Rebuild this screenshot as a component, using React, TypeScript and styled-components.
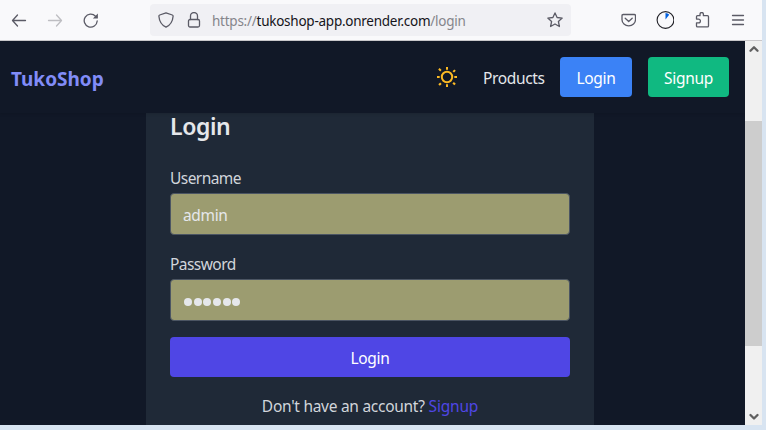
import React from "react";
import styled, { createGlobalStyle } from "styled-components";

const GlobalStyle = createGlobalStyle`
  * { box-sizing: border-box; }
  body { margin: 0; overflow: hidden; font-family: "Noto Sans", "Open Sans", sans-serif; }
  button, input { font: inherit; }
`;

const Desktop = styled.div`
  width: 766px;
  height: 430px;
  padding: 0 4px 5px 0;
  background: #d8e4f1;
`;

const BrowserWindow = styled.div`
  display: flex;
  flex-direction: column;
  height: 100%;
`;

const Toolbar = styled.header`
  display: flex;
  align-items: center;
  height: 41px;
  padding: 0 16px 0 11px;
  background: #f9f9fb;
  border-bottom: 1px solid #c8c7ca;
`;

const Icon = styled.svg<{ $size?: number; $color?: string; $stroke?: number }>`
  display: block;
  flex: none;
  width: ${(p) => p.$size ?? 16}px;
  height: ${(p) => p.$size ?? 16}px;
  color: ${(p) => p.$color ?? "#5b5b66"};
  fill: none;
  stroke: currentColor;
  stroke-width: ${(p) => p.$stroke ?? 1.3};
  stroke-linecap: round;
  stroke-linejoin: round;
`;

const NavigationIcons = styled.div`
  display: flex;
  gap: 20px;
  width: 139px;
`;

const AddressBar = styled.div`
  display: flex;
  align-items: center;
  width: 421px;
  height: 32px;
  padding: 0 8px;
  background: #f0f0f4;
  border-radius: 4px;
`;

const SecurityIcons = styled.div`
  display: flex;
  gap: 12px;
  width: 54px;
`;

const Url = styled.div`
  flex: 1;
  padding-top: 2px;
  color: #85858b;
  font-size: 13.5px;
  line-height: 20px;
  letter-spacing: -0.25px;
  white-space: nowrap;
`;

const Host = styled.span`
  color: #15141a;
`;

const ExtensionIcons = styled.div`
  display: flex;
  align-items: center;
  gap: 20px;
  margin-left: auto;
`;

const Viewport = styled.div`
  display: flex;
  flex: 1;
  min-height: 0;
`;

const Page = styled.div`
  flex: 1;
  overflow: hidden;
  background: #111827;
  color: #e5e7eb;
`;

const Navbar = styled.nav`
  display: flex;
  align-items: center;
  height: 72px;
  padding: 0 16px 0 11px;
  background: #111827;
  box-shadow: 0 1px 3px rgba(0, 0, 0, 0.12);
  position: relative;
`;

const Label = styled.span<{ $size?: number; $spacing?: number }>`
  font-size: ${(p) => p.$size ?? 15.5}px;
  letter-spacing: ${(p) => p.$spacing ?? -0.35}px;
  line-height: 24px;
  white-space: nowrap;
`;

const Brand = styled(Label)`
  margin-right: auto;
  padding-top: 3px;
  color: #818cf8;
  font-weight: 700;
`;

const ProductsLink = styled(Label)`
  width: 77px;
  margin-left: 25px;
  padding-top: 2px;
`;

const NavButton = styled.button<{ $color: string; $width: number }>`
  width: ${(p) => p.$width}px;
  height: 40px;
  margin-right: 16px;
  padding: 2px 0 0;
  border: 0;
  border-radius: 4px;
  background: ${(p) => p.$color};
  color: #fff;
  &:last-child { margin-right: 0; }
`;

const Card = styled.form`
  display: flex;
  flex-direction: column;
  width: 448px;
  height: 312px;
  margin-left: 146px;
  padding: 0 24px;
  background: #1f2937;
`;

const Title = styled.h1`
  height: 32px;
  margin: -3px 0 24px;
  font-size: 23px;
  font-weight: 600;
  line-height: 32px;
  letter-spacing: -0.4px;
`;

const Field = styled.label`
  display: flex;
  flex-direction: column;
  gap: 3px;
  height: 86px;
  color: #d1d5db;
`;

const Input = styled.input`
  width: 400px;
  height: 42px;
  padding: 2px 12px 0;
  border: 1px solid #4b5563;
  border-radius: 4px;
  outline: none;
  background: #9c9c70;
  color: #e5e7eb;
  font-size: 15.5px;
  letter-spacing: -0.35px;
`;

const PasswordInput = styled.div`
  display: flex;
  align-items: center;
  gap: 1.7px;
  width: 400px;
  height: 42px;
  padding: 4px 13px 0;
  border: 1px solid #4b5563;
  border-radius: 4px;
  background: #9c9c70;
`;

const Dot = styled.span`
  width: 8px;
  height: 8px;
  border-radius: 50%;
  background: #e5e7eb;
`;

const SubmitButton = styled.button`
  height: 40px;
  margin-top: -1px;
  padding: 2px 0 0;
  border: 0;
  border-radius: 4px;
  background: #4f46e5;
  color: #fff;
`;

const Prompt = styled.div`
  display: flex;
  justify-content: center;
  gap: 4px;
  margin-top: 17px;
  color: #d1d5db;
`;

const SignupLink = styled(Label)`
  color: #4f46e5;
`;

const Scrollbar = styled.div`
  display: flex;
  flex-direction: column;
  justify-content: space-between;
  align-items: center;
  width: 17px;
  padding: 3px 0;
  background: #f0f0f0;
`;

const Thumb = styled.div`
  width: 17px;
  height: 225px;
  margin: 67px 0 auto;
  background: #cdcdcd;
`;

const BackIcon = () => (
  <Icon><path d="M14.5 8.500H1.800M6.500 3 1.500 8.500 6.500 14" /></Icon>
);

const ForwardIcon = () => (
  <Icon $color="#bebec2"><path d="M1.500 8.500h12.700M9.500 3 14.500 8.500 9.500 14" /></Icon>
);

const ReloadIcon = () => (
  <Icon>
    <path d="M14.2 9A6.500 6.500 0 1 1 12.500 4.200" />
    <path d="M14.900 1.500v5H9.900z" fill="currentColor" stroke="none" />
  </Icon>
);

const ShieldIcon = () => (
  <Icon><path d="M8 .8 14.3 3c.7.3.9.6.8 1.2-.4 5.2-2.3 8.6-7.1 11C3.200 12.800 1.300 9.400.9 4.200.8 3.600 1 3.300 1.700 3z" /></Icon>
);

const LockIcon = () => (
  <Icon><rect x="2.500" y="7.500" width="11" height="7.500" rx="1.500" /><path d="M4.500 7.500V4a3.500 3.500 0 0 1 7 0v3.500" /></Icon>
);

const StarIcon = () => (
  <Icon><path d="m8 .9 2.100 4.600 5.100.6-3.800 3.400 1 5L8 12l-4.400 2.500 1-5L.8 6.100l5.100-.6z" /></Icon>
);

const PocketIcon = () => (
  <Icon><path d="M3.200 2.500h11.100q1.200 0 1.200 1.200v4a6.500 5.900 0 0 1-13.500 0v-4q0-1.200 1.200-1.200z" /><path d="m5.200 6.300 3.500 3.200 3.500-3.200" /></Icon>
);

const TimerIcon = () => (
  <Icon $size={18} $color="#202026" $stroke={1.1} viewBox="-0.5 0 18 18">
    <circle cx="9" cy="9" r="8.400" />
    <path d="M9 2v6.500l3.700-4.700C11.700 2.700 10.500 2 9 2z" fill="#0060df" stroke="none" />
  </Icon>
);

const PuzzleIcon = () => (
  <Icon><path d="M2.500 6V4.700q0-1 1-1H6V2.200a1.700 1.700 0 0 1 3.400 0v1.500h4.100q1 0 1 1v9.200q0 1-1 1h-10q-1 0-1-1v-3h2a1.900 1.900 0 0 0 0-3.800h-2z" /></Icon>
);

const MenuIcon = () => (
  <Icon><path d="M2.500 3.500h11M2.500 8h11M2.500 12.500h11" /></Icon>
);

const SunIcon = () => (
  <Icon $size={22} $color="#fbb924" $stroke={2} viewBox="0 0 22 22">
    <circle cx="11" cy="11" r="5.200" />
    <path
      d="M10 1h2v2.700h-2zM10 18.300h2V21h-2zM1 10h2.700v2H1zM18.300 10H21v2h-2.700zM2.200 3.500l1.400-1.400 2 1.900-1.400 1.400zM16.500 5.200l1.800-1.800 1.500 1.400-1.800 1.800zM2.300 18.300l1.900-1.800 1.500 1.400-1.900 1.800zM16.400 17.500l1.500-1.400 1.900 1.700-1.500 1.500z"
      fill="currentColor"
      stroke="none"
    />
  </Icon>
);

const ScrollIcon = ({ down = false }: { down?: boolean }) => (
  <Icon $size={10} $color="#606060" $stroke={2.3}>
    <path d={down ? "M1.500 3 5 6.500 8.500 3" : "M1.500 6.800 5 3.300 8.500 6.800"} />
  </Icon>
);

export default function App() {
  return (
    <>
      <GlobalStyle />
      <Desktop>
        <BrowserWindow>
          <Toolbar>
            <NavigationIcons><BackIcon /><ForwardIcon /><ReloadIcon /></NavigationIcons>
            <AddressBar>
              <SecurityIcons><ShieldIcon /><LockIcon /></SecurityIcons>
              <Url>https://<Host>tukoshop-app.onrender.com</Host>/login</Url>
              <StarIcon />
            </AddressBar>
            <ExtensionIcons><PocketIcon /><TimerIcon /><PuzzleIcon /><MenuIcon /></ExtensionIcons>
          </Toolbar>
          <Viewport>
            <Page>
              <Navbar>
                <Brand $size={19} $spacing={0}>TukoShop</Brand>
                <SunIcon />
                <ProductsLink>Products</ProductsLink>
                <NavButton $color="#3b82f6" $width={72}><Label>Login</Label></NavButton>
                <NavButton $color="#10b981" $width={81}><Label $spacing={-0.25}>Signup</Label></NavButton>
              </Navbar>
              <Card>
                <Title>Login</Title>
                <Field><Label $spacing={-0.55}>Username</Label><Input defaultValue="admin" /></Field>
                <Field as="div">
                  <Label $spacing={-0.55}>Password</Label>
                  <PasswordInput>{Array.from({ length: 6 }, (_, i) => <Dot key={i} />)}</PasswordInput>
                </Field>
                <SubmitButton type="button"><Label>Login</Label></SubmitButton>
                <Prompt><Label $spacing={-0.28}>Don't have an account?</Label><SignupLink $spacing={-0.2}>Signup</SignupLink></Prompt>
              </Card>
            </Page>
            <Scrollbar><ScrollIcon /><Thumb /><ScrollIcon down /></Scrollbar>
          </Viewport>
        </BrowserWindow>
      </Desktop>
    </>
  );
}
